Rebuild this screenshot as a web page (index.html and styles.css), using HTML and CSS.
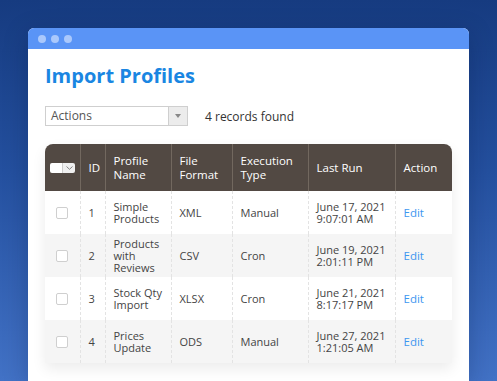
FILE: index.html
```html
<!DOCTYPE html>
<html>
<head>
<meta charset="utf-8">
<link rel="stylesheet" href="styles.css">
</head>
<body>
<div class="window">
  <div class="titlebar">
    <span class="dot"></span><span class="dot"></span><span class="dot"></span>
  </div>
  <div class="content">
    <h1 class="title">Import Profiles</h1>
    <div class="toolbar">
      <div class="select">
        <span class="select-label">Actions</span>
        <span class="select-btn"><svg width="6" height="4" viewBox="0 0 6 4"><path d="M0 0h6L3 4z" fill="#888"/></svg></span>
      </div>
      <span class="count">4 records found</span>
    </div>
    <div class="grid-wrap">
      <table class="grid">
        <colgroup>
          <col class="c-cb"><col class="c-id"><col class="c-name"><col class="c-fmt"><col class="c-exec"><col class="c-run"><col class="c-act">
        </colgroup>
        <thead>
          <tr>
            <th class="th-cb"><span class="mass"><span class="mass-box"></span><span class="mass-arrow"><svg width="7" height="4" viewBox="0 0 7 4"><path d="M0.5 0.5L3.5 3.3L6.5 0.5" fill="none" stroke="#777" stroke-width="0.9"/></svg></span></span></th>
            <th>ID</th>
            <th>Profile<br>Name</th>
            <th>File<br>Format</th>
            <th>Execution<br>Type</th>
            <th>Last Run</th>
            <th>Action</th>
          </tr>
        </thead>
        <tbody>
          <tr>
            <td class="td-cb"><span class="cb"></span></td>
            <td>1</td>
            <td>Simple<br>Products</td>
            <td>XML</td>
            <td>Manual</td>
            <td>June 17, 2021<br>9:07:01 AM</td>
            <td><a class="edit">Edit</a></td>
          </tr>
          <tr class="alt">
            <td class="td-cb"><span class="cb"></span></td>
            <td>2</td>
            <td>Products<br>with<br>Reviews</td>
            <td>CSV</td>
            <td>Cron</td>
            <td>June 19, 2021<br>2:01:11 PM</td>
            <td><a class="edit">Edit</a></td>
          </tr>
          <tr>
            <td class="td-cb"><span class="cb"></span></td>
            <td>3</td>
            <td>Stock Qty<br>Import</td>
            <td>XLSX</td>
            <td>Cron</td>
            <td>June 21, 2021<br>8:17:17 PM</td>
            <td><a class="edit">Edit</a></td>
          </tr>
          <tr class="alt">
            <td class="td-cb"><span class="cb"></span></td>
            <td>4</td>
            <td>Prices<br>Update</td>
            <td>ODS</td>
            <td>Manual</td>
            <td>June 27, 2021<br>1:21:05 AM</td>
            <td><a class="edit">Edit</a></td>
          </tr>
        </tbody>
      </table>
    </div>
  </div>
</div>
</body>
</html>
```
FILE: styles.css
```css
html, body {
  margin: 0;
  height: 100%;
}
body {
  background: linear-gradient(180deg, #163b80 0%, #24509f 45%, #4272c6 100%);
  font-family: "Open Sans", "DejaVu Sans", sans-serif;
  padding: 28px 0 0 28px;
  box-sizing: border-box;
  overflow: hidden;
}
.window {
  width: 441px;
  height: 353px;
  background: #fff;
  border-radius: 6px 6px 0 0;
  box-shadow: 0 6px 24px rgba(0, 20, 60, 0.25);
}
.titlebar {
  height: 21px;
  background: #5a94f6;
  border-radius: 6px 6px 0 0;
  display: flex;
  align-items: center;
  gap: 5px;
  padding-left: 10px;
}
.dot {
  width: 8px;
  height: 8px;
  border-radius: 50%;
  background: #aac8fc;
}
.content {
  padding: 0 17px;
}
.title {
  margin: 13px 0 0;
  font-size: 20px;
  line-height: 28px;
  font-weight: 700;
  color: #1a86e2;
}
.toolbar {
  margin-top: 16px;
  display: flex;
  align-items: center;
  height: 20px;
}
.select {
  width: 143px;
  height: 20px;
  box-sizing: border-box;
  border: 1px solid #cfcfcf;
  display: flex;
}
.select-label {
  flex: 1;
  font-size: 12px;
  line-height: 18px;
  color: #555;
  padding-left: 5px;
}
.select-btn {
  width: 18px;
  background: #ececec;
  border-left: 1px solid #cfcfcf;
  display: flex;
  align-items: center;
  justify-content: center;
}
.count {
  margin-left: 17px;
  font-size: 12px;
  color: #333;
}
.grid-wrap {
  margin-top: 18px;
  width: 407px;
  border-radius: 8px 8px 0 0;
  box-shadow: 0 6px 14px rgba(0, 0, 0, 0.08);
  overflow: hidden;
}
.grid {
  width: 407px;
  border-collapse: collapse;
  table-layout: fixed;
  font-size: 11px;
  color: #444;
}
.c-cb { width: 35px; }
.c-id { width: 25px; }
.c-name { width: 66px; }
.c-fmt { width: 61px; }
.c-exec { width: 76px; }
.c-run { width: 87px; }
.c-act { width: 57px; }
.grid th {
  background: #524943;
  color: #fff;
  font-weight: 400;
  text-align: left;
  height: 47px;
  padding: 0 0 0 8px;
  line-height: 14px;
  border-left: 1px solid #72685f;
  font-size: 11.5px;
}
.grid th.th-cb {
  border-left: none;
  padding-left: 5px;
}
.mass {
  display: inline-flex;
  vertical-align: middle;
  height: 10px;
  border-radius: 2px;
  overflow: hidden;
}
.mass-box {
  width: 12px;
  background: #fff;
}
.mass-arrow {
  width: 12px;
  background: #efefef;
  display: flex;
  align-items: center;
  justify-content: center;
  border-left: 1px solid #ccc;
}
.grid td {
  height: 43px;
  padding: 0 0 0 8px;
  line-height: 12px;
  border-left: 1px dashed #e3e3e3;
  background: #fff;
  vertical-align: middle;
}
.grid tr.alt td {
  background: #f5f5f5;
}
.grid td.td-cb {
  border-left: none;
  padding-left: 11px;
}
.cb {
  display: block;
  width: 12px;
  height: 12px;
  box-sizing: border-box;
  border: 1px solid #cfcfcf;
  border-radius: 2px;
  background: #fff;
}
.edit {
  color: #3d97f0;
  font-size: 11.5px;
}
```
